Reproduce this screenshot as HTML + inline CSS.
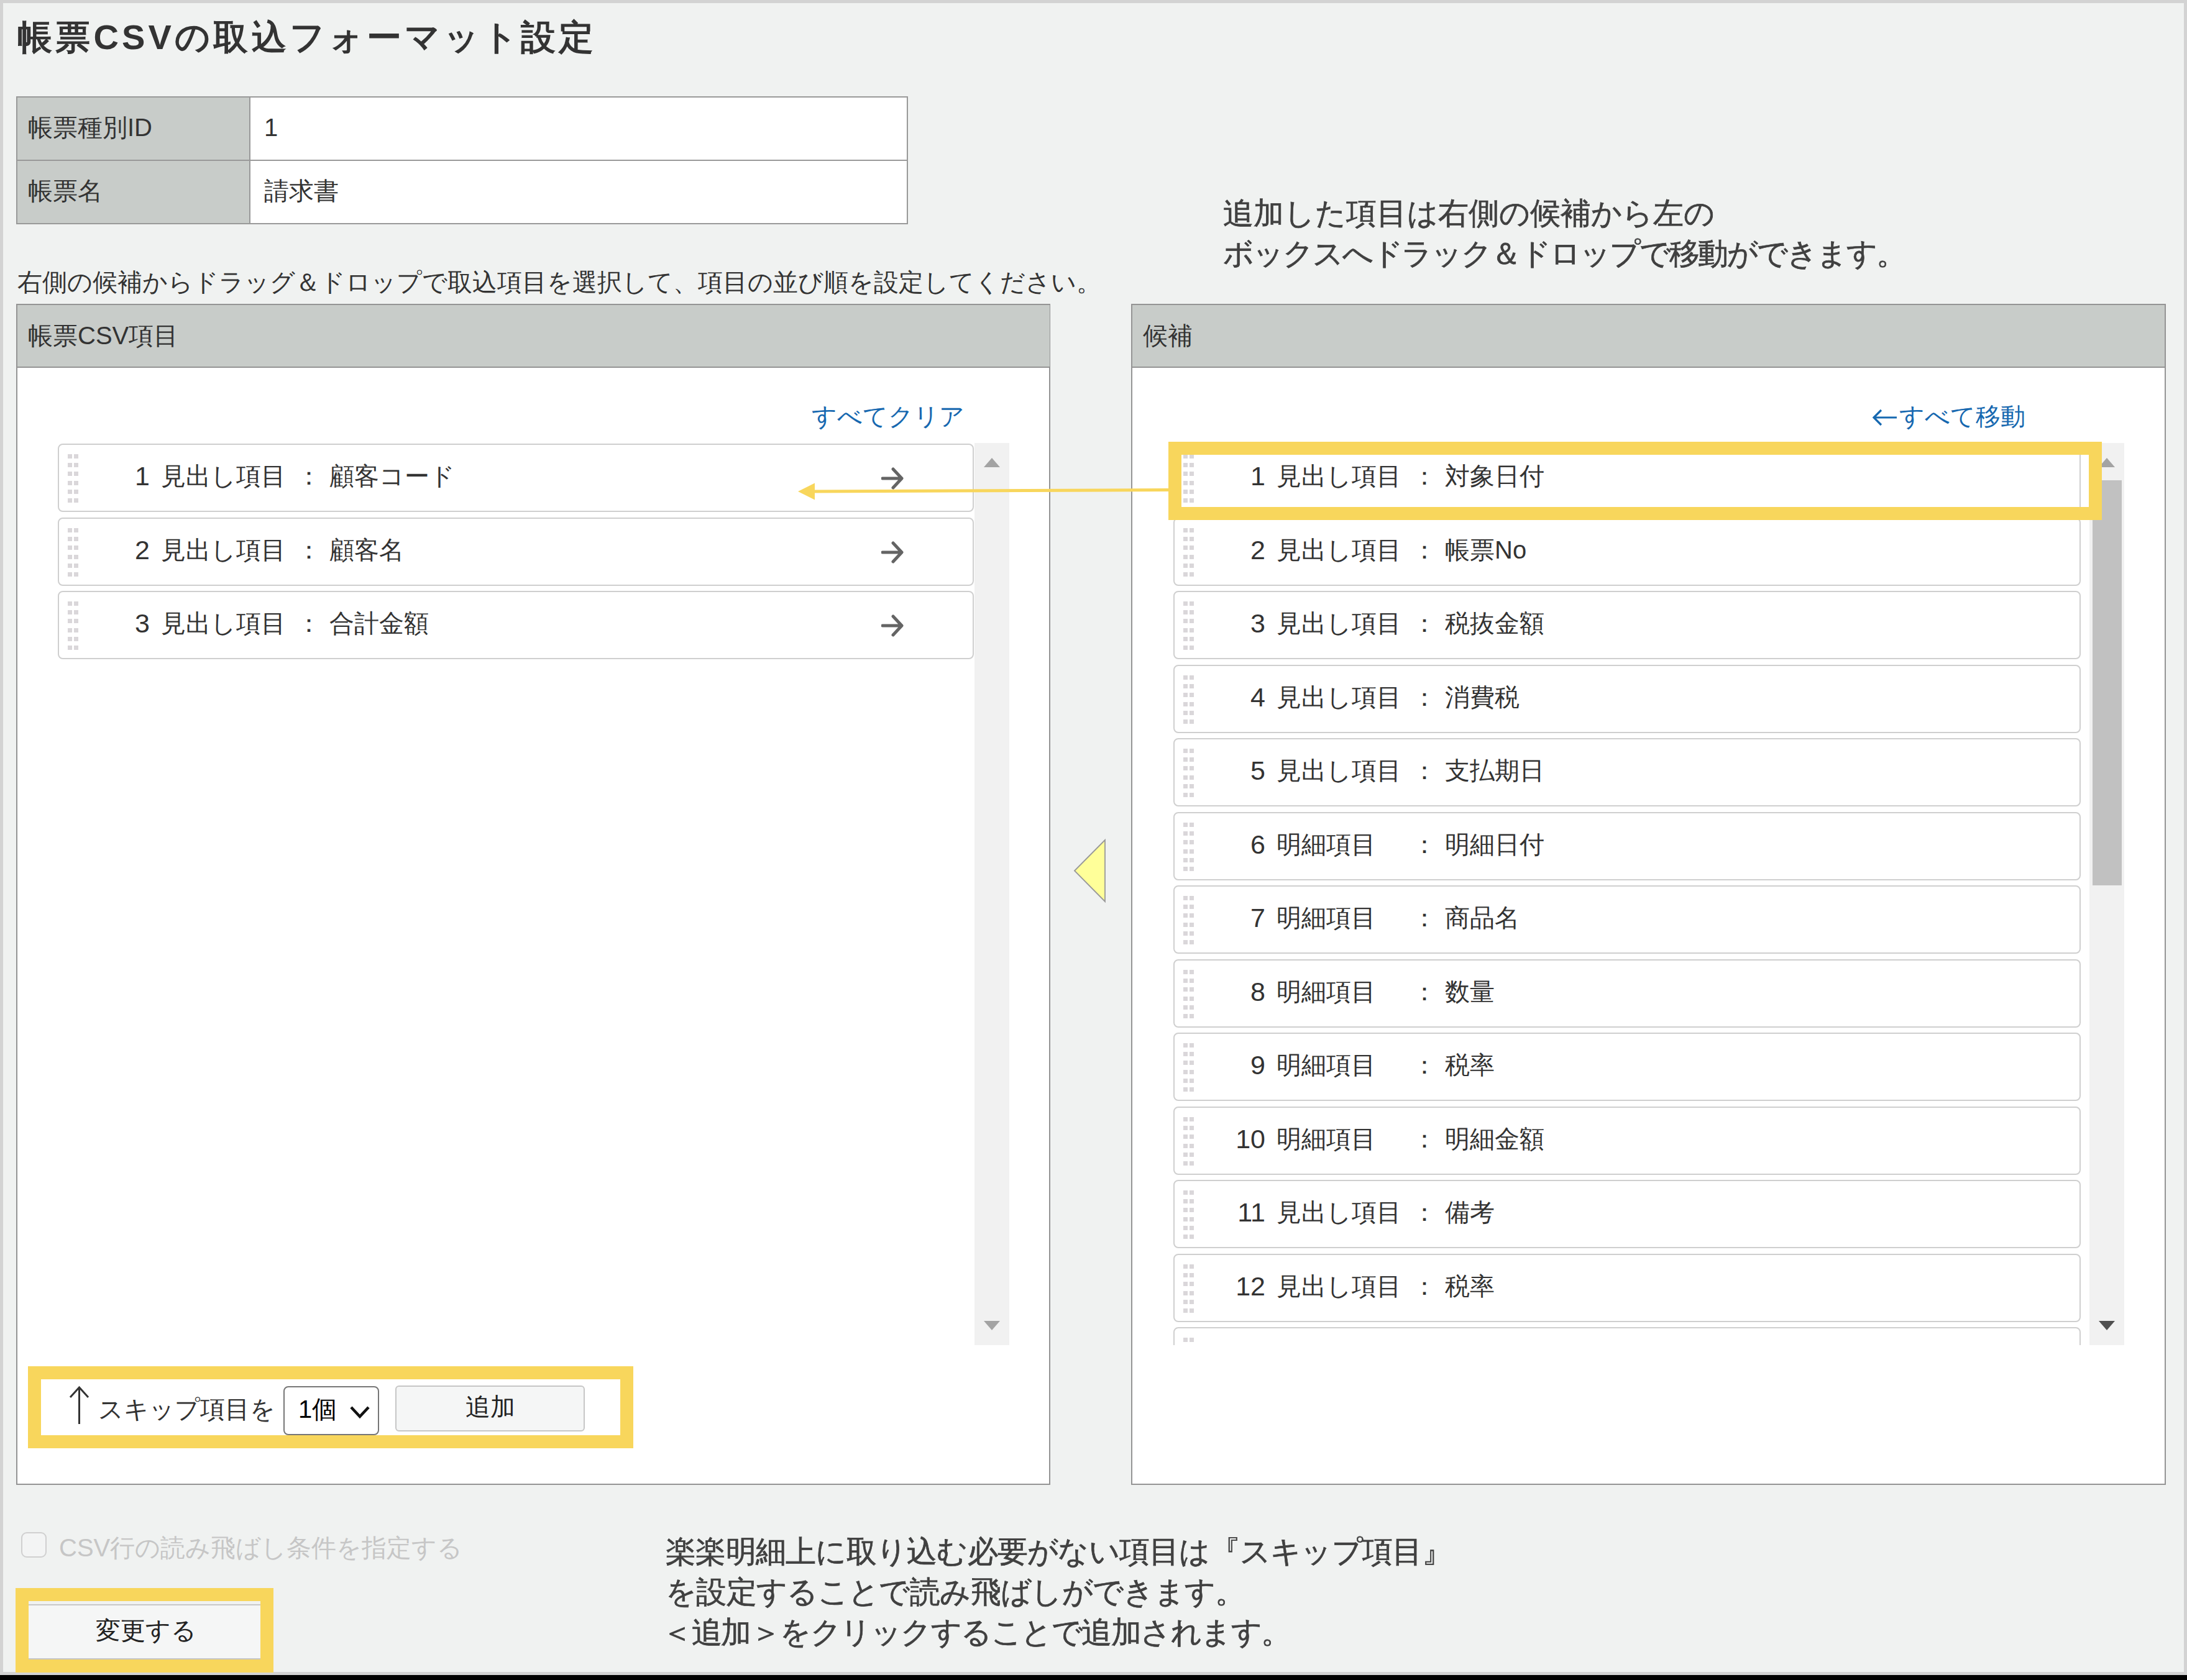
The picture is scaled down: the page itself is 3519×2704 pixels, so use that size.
<!DOCTYPE html>
<html lang="ja">
<head>
<meta charset="utf-8">
<title>帳票CSVの取込フォーマット設定</title>
<style>
*{box-sizing:border-box;margin:0;padding:0}
html,body{width:3519px;height:2704px;overflow:hidden;background:#000}
body{font-family:"Liberation Sans",sans-serif;color:#333;font-size:40px;line-height:1;position:relative}
.a{position:absolute;white-space:nowrap}
#frame{left:0;top:0;width:3519px;height:2696px;border:5px solid #d3d3d3;background:#f0f2f1}
#title{left:28px;top:28px;font-size:56px;font-weight:bold;line-height:64px;color:#333;letter-spacing:5.2px}
/* info table */
#info{left:26px;top:155px;width:1435px;height:206px;border:2px solid #999;background:#fff}
#info .th{left:0;width:375px;height:100px;background:#c8ccc9;border-right:2px solid #999;padding-left:17px;line-height:96px}
#info .td{left:375px;width:1056px;height:100px;padding-left:22px;line-height:96px}
#info .r2{top:102px}
#info .sep{left:0;top:100px;width:1431px;height:2px;background:#999}
#desc{left:28px;top:430px;line-height:48px}
/* panels */
.panel{top:489px;width:1665px;height:1901px;border:2px solid #949494;background:#fff}
.panel .hd{left:0;top:0;width:1661px;height:101px;background:#c8ccc9;border-bottom:2px solid #949494;padding-left:17px;line-height:98px}
#pl{left:26px;width:1664px}
#pr{left:1820px}
.link{color:#1668b0;line-height:48px}
.list{top:713px;height:1452px;overflow:hidden}
.it{position:absolute;left:0;width:1474px;height:110px;border:2px solid #cfcfcf;border-radius:8px;background:#fff;white-space:nowrap}
.lr .it{width:1460px}
.it>*{position:absolute}
.it .h{left:14px;top:15px;width:17px;height:79px;
 background-image:linear-gradient(#dad7da,#dad7da),linear-gradient(#dad7da,#dad7da);
 background-size:7px 7px;background-position:0 0,10px 0;background-repeat:repeat-y;
 -webkit-mask-image:repeating-linear-gradient(#000 0,#000 7px,transparent 7px,transparent 14.2px);
 mask-image:repeating-linear-gradient(#000 0,#000 7px,transparent 7px,transparent 14.2px)}
.it .n{left:50px;width:96px;text-align:right;font-weight:normal;font-size:43px;top:0;line-height:100px}
.it .l{left:164px;top:0;line-height:100px}
.it .c{left:382px;top:0;line-height:100px}
.it .v{left:435px;top:0;line-height:100px}
.it .ar{left:1323px;top:36px;width:36px;height:36px}
.sb{top:713px;width:56px;height:1452px;background:#f1f1f1}
.tri{width:0;height:0;border-left:13px solid transparent;border-right:13px solid transparent}
.hl{border:21px solid #f8d65c}
.anno{font-size:49px;line-height:65px;color:#404040;-webkit-text-stroke:0.7px #404040}
</style>
</head>
<body>
<div id="frame" class="a"></div>
<div id="title" class="a">帳票CSVの取込フォーマット設定</div>

<div id="info" class="a">
 <div class="a th">帳票種別ID</div><div class="a td">1</div>
 <div class="a sep"></div>
 <div class="a th r2">帳票名</div><div class="a td r2">請求書</div>
</div>

<div id="desc" class="a">右側の候補からドラッグ＆ドロップで取込項目を選択して、項目の並び順を設定してください。</div>

<div class="a anno" style="left:1968px;top:311px">追加した項目は右側の候補から左の<br><span style="letter-spacing:-2.1px">ボックスへドラック＆ドロップで移動ができます。</span></div>

<!-- left panel -->
<div id="pl" class="a panel"><div class="a hd">帳票CSV項目</div></div>
<div class="a link" style="left:1306px;top:646px">すべてクリア</div>
<div class="a list" style="left:93px;width:1476px">
<div class="it" style="top:1.0px"><i class="h"></i><b class="n">1</b><span class="l">見出し項目</span><span class="c">：</span><span class="v">顧客コード</span><svg class="ar" viewBox="0 0 36 36"><path d="M2 18H32M19 3L33 18L19 33" fill="none" stroke="#646464" stroke-width="5" stroke-linecap="round" stroke-linejoin="round"/></svg></div>
<div class="it" style="top:119.5px"><i class="h"></i><b class="n">2</b><span class="l">見出し項目</span><span class="c">：</span><span class="v">顧客名</span><svg class="ar" viewBox="0 0 36 36"><path d="M2 18H32M19 3L33 18L19 33" fill="none" stroke="#646464" stroke-width="5" stroke-linecap="round" stroke-linejoin="round"/></svg></div>
<div class="it" style="top:238.0px"><i class="h"></i><b class="n">3</b><span class="l">見出し項目</span><span class="c">：</span><span class="v">合計金額</span><svg class="ar" viewBox="0 0 36 36"><path d="M2 18H32M19 3L33 18L19 33" fill="none" stroke="#646464" stroke-width="5" stroke-linecap="round" stroke-linejoin="round"/></svg></div>
</div>
<div class="a sb" style="left:1568px">
 <div class="a tri" style="left:15px;top:24px;border-bottom:15px solid #a3a3a3"></div>
 <div class="a tri" style="left:15px;top:1413px;border-top:15px solid #a3a3a3"></div>
</div>

<!-- right panel -->
<div id="pr" class="a panel"><div class="a hd">候補</div></div>
<svg class="a" style="left:3012px;top:658px" width="42" height="28" viewBox="0 0 42 28"><path d="M3 14H40M15 2L3 14L15 26" fill="none" stroke="#1668b0" stroke-width="3.2"/></svg>
<div class="a link" style="left:3056px;top:646px">すべて移動</div>
<div class="a list lr" style="left:1888px;width:1461px">
<div class="it" style="top:1.0px"><i class="h"></i><b class="n">1</b><span class="l">見出し項目</span><span class="c">：</span><span class="v">対象日付</span></div>
<div class="it" style="top:119.5px"><i class="h"></i><b class="n">2</b><span class="l">見出し項目</span><span class="c">：</span><span class="v">帳票No</span></div>
<div class="it" style="top:238.0px"><i class="h"></i><b class="n">3</b><span class="l">見出し項目</span><span class="c">：</span><span class="v">税抜金額</span></div>
<div class="it" style="top:356.5px"><i class="h"></i><b class="n">4</b><span class="l">見出し項目</span><span class="c">：</span><span class="v">消費税</span></div>
<div class="it" style="top:475.0px"><i class="h"></i><b class="n">5</b><span class="l">見出し項目</span><span class="c">：</span><span class="v">支払期日</span></div>
<div class="it" style="top:593.5px"><i class="h"></i><b class="n">6</b><span class="l">明細項目</span><span class="c">：</span><span class="v">明細日付</span></div>
<div class="it" style="top:712.0px"><i class="h"></i><b class="n">7</b><span class="l">明細項目</span><span class="c">：</span><span class="v">商品名</span></div>
<div class="it" style="top:830.5px"><i class="h"></i><b class="n">8</b><span class="l">明細項目</span><span class="c">：</span><span class="v">数量</span></div>
<div class="it" style="top:949.0px"><i class="h"></i><b class="n">9</b><span class="l">明細項目</span><span class="c">：</span><span class="v">税率</span></div>
<div class="it" style="top:1067.5px"><i class="h"></i><b class="n">10</b><span class="l">明細項目</span><span class="c">：</span><span class="v">明細金額</span></div>
<div class="it" style="top:1186.0px"><i class="h"></i><b class="n">11</b><span class="l">見出し項目</span><span class="c">：</span><span class="v">備考</span></div>
<div class="it" style="top:1304.5px"><i class="h"></i><b class="n">12</b><span class="l">見出し項目</span><span class="c">：</span><span class="v">税率</span></div>
<div class="it" style="top:1423.0px"><i class="h"></i><b class="n">13</b><span class="l">見出し項目</span><span class="c">：</span><span class="v"></span></div>
</div>
<div class="a sb" style="left:3362px">
 <div class="a tri" style="left:15px;top:24px;border-bottom:15px solid #a3a3a3"></div>
 <div class="a" style="left:5px;top:60px;width:47px;height:652px;background:#c1c1c1"></div>
 <div class="a tri" style="left:15px;top:1413px;border-top:15px solid #505050"></div>
</div>

<!-- middle triangle -->
<svg class="a" style="left:1720px;top:1340px" width="70" height="124" viewBox="0 0 70 124"><path d="M9 61.5L58 12V111Z" fill="#ffff99" stroke="#999" stroke-width="1.8"/></svg>

<!-- yellow annotation arrow -->
<svg class="a" style="left:1280px;top:770px" width="620" height="40" viewBox="0 0 620 40"><path d="M30 21L600 18.5" stroke="#f8d65c" stroke-width="5" fill="none"/><path d="M4 21L31 7.5V34.5Z" fill="#f8d65c"/></svg>
<div class="a hl" style="left:1880px;top:711px;width:1502px;height:126px"></div>

<!-- skip row -->
<svg class="a" style="left:108px;top:2228px" width="40" height="66" viewBox="0 0 40 66"><path d="M19.5 5V64M5 21L19.5 5L34 21" fill="none" stroke="#333" stroke-width="3"/></svg>
<div class="a" style="left:158px;top:2244px;line-height:48px">スキップ項目を</div>
<div class="a" style="left:456px;top:2231px;width:154px;height:79px;border:2px solid #767676;border-radius:8px;background:#fff;color:#000;line-height:71px;padding-left:22px">1個
 <svg class="a" style="left:104px;top:29px" width="34" height="22" viewBox="0 0 34 22"><path d="M3 3L17 18L31 3" fill="none" stroke="#111" stroke-width="4.5"/></svg>
</div>
<div class="a" style="left:636px;top:2230px;width:305px;height:74px;border:2px solid #c6c6c6;border-radius:6px;background:#f5f6f6;color:#222;text-align:center;line-height:64px">追加</div>
<div class="a hl" style="left:45px;top:2199px;width:974px;height:132px"></div>

<!-- checkbox -->
<div class="a" style="left:34px;top:2466px;width:41px;height:41px;border:2px solid #d0d0d0;border-radius:9px;background:#f3f4f4"></div>
<div class="a" style="left:95px;top:2467px;line-height:48px;color:#c6c6c6">CSV行の読み飛ばし条件を指定する</div>

<!-- change button -->
<div class="a" style="left:46px;top:2582px;width:373px;height:89px;background:#f5f6f6;border-top:2px solid #c8c8c8;border-bottom:2px solid #c6c6c6;color:#222;text-align:center;line-height:80px;padding-left:4px">変更する</div>
<div class="a hl" style="left:25px;top:2556px;width:415px;height:136px"></div>

<div class="a anno" style="left:1071px;top:2465px"><span style="letter-spacing:-0.75px">楽楽明細上に取り込む必要がない項目は『スキップ項目』</span><br><span style="letter-spacing:-0.65px">を設定することで読み飛ばしができます。</span><br><span style="letter-spacing:-1.5px;margin-left:-6px">＜追加＞をクリックすることで追加されます。</span></div>
</body>
</html>
